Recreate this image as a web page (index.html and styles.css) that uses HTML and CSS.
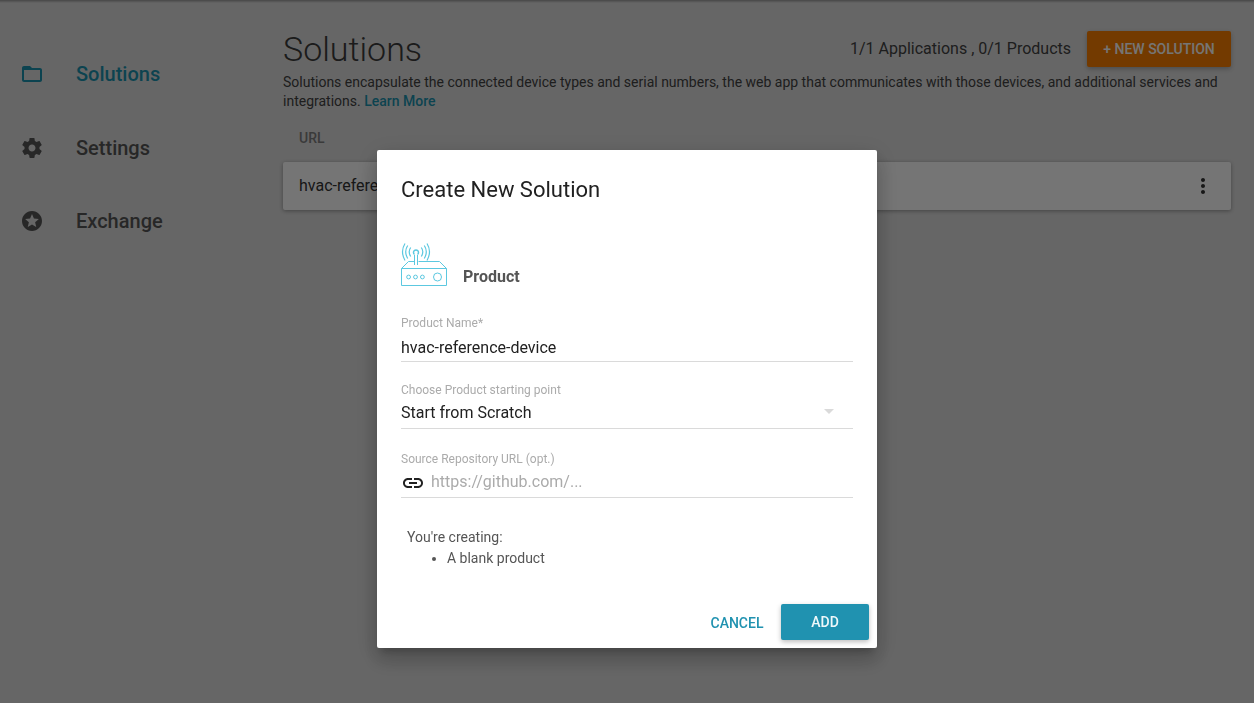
FILE: index.html
```html
<!DOCTYPE html>
<html lang="en">
<head>
<meta charset="utf-8">
<title>Solutions</title>
<link rel="stylesheet" href="styles.css">
</head>
<body>
<div class="app">
  <nav class="sidebar">
    <a class="nav-item active"><svg class="icon" viewBox="0 0 24 24"><path d="M20 6h-8l-2-2H4c-1.100 0-1.990.9-1.990 2L2 18c0 1.100.9 2 2 2h16c1.100 0 2-.9 2-2V8c0-1.100-.9-2-2-2zm0 12H4V8h16v10z"/></svg><span>Solutions</span></a>
    <a class="nav-item"><svg class="icon" viewBox="0 0 24 24"><path d="M19.430 12.980c.04-.32.07-.64.07-.98s-.03-.66-.07-.98l2.110-1.650c.19-.15.24-.42.12-.64l-2-3.460c-.12-.22-.39-.3-.61-.22l-2.490 1c-.52-.4-1.080-.73-1.690-.98l-.38-2.650C14.460 2.180 14.250 2 14 2h-4c-.25 0-.46.18-.49.42l-.38 2.650c-.61.25-1.170.59-1.690.98l-2.490-1c-.23-.09-.49 0-.61.22l-2 3.460c-.13.22-.07.49.12.64l2.110 1.650c-.04.32-.07.65-.07.98s.03.66.07.98l-2.110 1.650c-.19.15-.24.42-.12.64l2 3.460c.12.22.39.3.61.22l2.490-1c.52.4 1.080.73 1.690.98l.38 2.650c.03.24.24.42.49.42h4c.25 0 .46-.18.49-.42l.38-2.650c.61-.25 1.170-.59 1.690-.98l2.490 1c.23.09.49 0 .61-.22l2-3.460c.12-.22.07-.49-.12-.64l-2.110-1.650zM12 15.500c-1.930 0-3.500-1.570-3.500-3.500s1.570-3.500 3.500-3.500 3.500 1.570 3.500 3.500-1.570 3.500-3.500 3.500z"/></svg><span>Settings</span></a>
    <a class="nav-item"><svg class="icon" viewBox="0 0 24 24"><path d="M11.990 2C6.470 2 2 6.480 2 12s4.470 10 9.990 10C17.520 22 22 17.520 22 12S17.520 2 11.990 2zm4.240 16L12 15.450 7.770 18l1.120-4.810-3.730-3.230 4.920-.42L12 5l1.920 4.530 4.920.42-3.730 3.230L16.230 18z"/></svg><span>Exchange</span></a>
  </nav>
  <main class="content">
    <header class="page-head">
      <h1>Solutions</h1>
      <div class="head-actions">
        <span class="quota">1/1 Applications , 0/1 Products</span>
        <button class="new-btn">+ NEW SOLUTION</button>
      </div>
    </header>
    <p class="intro">Solutions encapsulate the connected device types and serial numbers, the web app that communicates with those devices, and additional services and integrations. <a>Learn More</a></p>
    <div class="col-head">URL</div>
    <div class="row-card">
      <span>hvac-reference</span>
      <svg class="icon" viewBox="0 0 24 24"><path d="M12 8c1.100 0 2-.9 2-2s-.9-2-2-2-2 .9-2 2 .9 2 2 2zm0 2c-1.100 0-2 .9-2 2s.9 2 2 2 2-.9 2-2-.9-2-2-2zm0 6c-1.100 0-2 .9-2 2s.9 2 2 2 2-.9 2-2-.9-2-2-2z"/></svg>
    </div>
  </main>
</div>
<div class="backdrop">
  <section class="dialog" role="dialog">
    <h2>Create New Solution</h2>
    <div class="kind">
      <svg class="device" viewBox="0 0 48 44">
        <path d="M.5 25.500h45v17H.5zM.5 25.500l7-7h6M17.500 18.500h21l7 7M13.500 22v-10M16.500 22v-10"/>
        <path class="antenna" d="M13.500 11.500a2.500 2.500 0 1 1 3 0"/>
        <circle cx="7.600" cy="34" r="1.900"/><circle cx="14.500" cy="34" r="1.900"/><circle cx="21.400" cy="34" r="1.900"/><circle cx="36.500" cy="34" r="4"/>
        <path class="waves" d="M9.700 4.500q-3 4 0 9M6.700 2.500q-4 6 0 13M4 .5q-5 8 0 17M20.300 4.500q3 4 0 9M23.300 2.500q4 6 0 13M26 .5q5 8 0 17"/>
      </svg>
      <span>Product</span>
    </div>
    <div class="field name-field"><label>Product Name*</label><div class="value">hvac-reference-device</div></div>
    <div class="field start-field"><label>Choose Product starting point</label><div class="value"><span>Start from Scratch</span><i class="caret"></i></div></div>
    <div class="field repo-field"><label>Source Repository URL (opt.)</label><div class="value"><svg class="icon" viewBox="0 0 24 24"><path d="M3.900 12c0-1.710 1.390-3.100 3.100-3.100h4V7H7c-2.760 0-5 2.240-5 5s2.240 5 5 5h4v-1.900H7c-1.710 0-3.100-1.390-3.100-3.100zM8 13h8v-2H8v2zm9-6h-4v1.900h4c1.710 0 3.100 1.390 3.100 3.100s-1.390 3.100-3.100 3.100h-4V17h4c2.760 0 5-2.240 5-5s-2.240-5-5-5z"/></svg><span class="placeholder">https://github.com/...</span></div></div>
    <div class="summary">You're creating:<ul><li>A blank product</li></ul></div>
    <footer class="actions"><button class="cancel">CANCEL</button><button class="add">ADD</button></footer>
  </section>
</div>
</body>
</html>
```
FILE: styles.css
```css
* { box-sizing: border-box; }
body { margin: 0; font-family: Roboto, sans-serif; color: #424242; background: #dfdfdf; overflow: hidden; }
h1, h2, p, ul { margin: 0; }
button { border: 0; font: 500 14px Roboto, sans-serif; border-radius: 2px; padding: 0; }
.icon { width: 24px; height: 24px; fill: currentColor; flex: none; }
.app { display: flex; height: 703px; background: linear-gradient(rgba(0,0,0,.3), transparent 3px); }
.sidebar { width: 283px; padding: 37px 20px 0; }
.nav-item { display: flex; align-items: center; height: 73.700px; gap: 32px; font-size: 20px; font-weight: 500; color: #565656; }
.nav-item.active { color: #1c93ae; }
.content { width: 948px; padding-top: 31px; }
.page-head { display: flex; justify-content: space-between; height: 42px; }
h1 { font-size: 34px; line-height: 36px; font-weight: 300; color: #3c3c3c; }
.head-actions { display: flex; gap: 16px; height: 36px; }
.quota { font-size: 16px; line-height: 36px; }
.new-btn { width: 144px; height: 36px; color: #fff; background: #fb7f00; box-shadow: 0 2px 5px rgba(0,0,0,.26); }
.intro { font-size: 14px; line-height: 19px; }
.intro a { display: inline-block; font-weight: 500; color: #1c93ae; }
.col-head { margin: 17px 16px 0; font-size: 14px; line-height: 20px; font-weight: 500; color: #7e7e7e; }
.row-card { display: flex; align-items: center; justify-content: space-between; height: 48px; margin-top: 14px; padding: 0 16px; background: #fff; border-radius: 2px; box-shadow: 0 1px 4px rgba(0,0,0,.35); font-size: 16px; color: #333; }
.row-card span { padding-bottom: 2px; }
.backdrop { position: fixed; inset: 0; display: flex; justify-content: center; align-items: flex-start; padding-top: 150px; background: rgba(0,0,0,.54); }
.dialog { display: flex; flex-direction: column; width: 500px; height: 498px; padding: 25px 24px 0; border-radius: 2px; background: #fff; box-shadow: 0 7px 8px -4px rgba(0,0,0,.2), 0 13px 19px 2px rgba(0,0,0,.14), 0 5px 24px 4px rgba(0,0,0,.12); }
h2 { font-size: 22px; line-height: 30px; font-weight: 400; color: #212121; }
.kind { display: flex; gap: 14px; margin-top: 38px; height: 44px; font-size: 16px; font-weight: 700; color: #555; }
.kind span { padding-top: 24px; line-height: 20px; }
.device { width: 48px; height: 44px; fill: none; stroke: #5cc8e0; stroke-width: 1; }
.device .antenna { stroke-width: 1.500; }
.device .waves { stroke-width: 1.200; }
.field { border-bottom: 1px solid #dadada; }
.field label { display: block; font-size: 12px; line-height: 16px; color: #ababab; }
.value { display: flex; align-items: center; height: 24px; font-size: 16px; color: #212121; }
.name-field { height: 47px; margin-top: 28px; }
.name-field .value { margin-top: 4px; }
.start-field { height: 47px; margin-top: 20px; }
.start-field .value { margin-top: 2px; justify-content: space-between; padding-right: 19px; }
.caret { margin-bottom: 1px; border: 5px solid transparent; border-top-color: #dadada; border-bottom: 0; }
.repo-field { height: 47px; margin-top: 22px; }
.repo-field .value { margin-top: 3px; gap: 6px; }
.repo-field .icon { margin-top: 2px; }
.placeholder { padding-bottom: 2px; color: #ababab; }
.summary { margin: 29px 6px 0; font-size: 14px; line-height: 21px; color: #555; }
.summary ul { padding-left: 40px; }
.actions { display: flex; justify-content: flex-end; gap: 9px; margin: auto -16px 8px; }
.actions button { height: 36px; }
.cancel { width: 70px; padding-top: 2px; color: #2092b0; background: none; }
.add { width: 88px; color: #eef8fa; background: #2092b0; box-shadow: 0 2px 5px rgba(0,0,0,.26); }
```
